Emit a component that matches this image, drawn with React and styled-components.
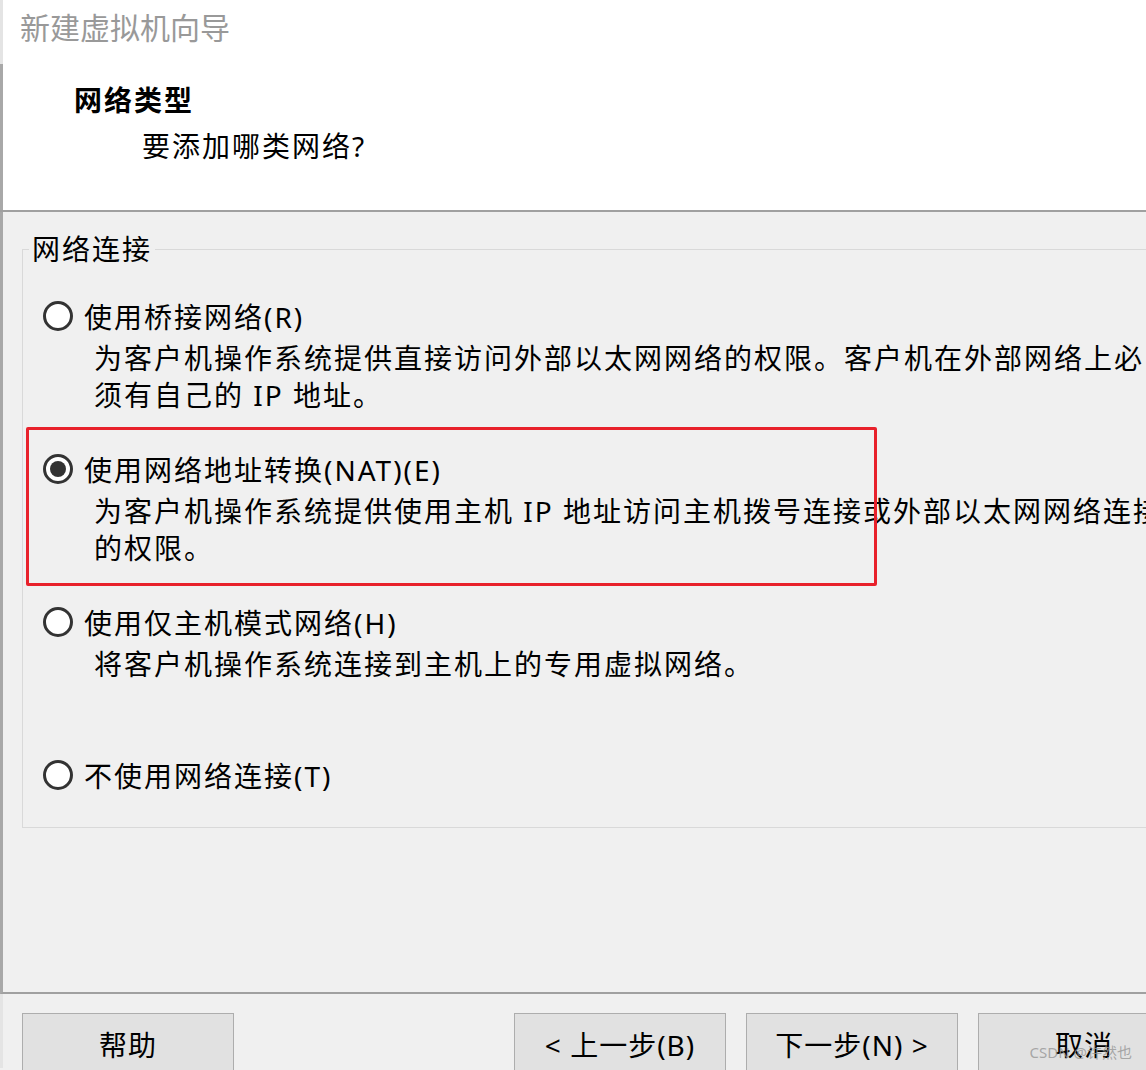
import React from 'react'
import styled, { createGlobalStyle } from 'styled-components'

const GlobalStyle = createGlobalStyle`
  html, body {
    margin: 0;
    padding: 0;
    background: #f0f0f0;
    overflow: hidden;
  }
  body {
    font-family: "Noto Sans", "Noto Sans CJK SC", sans-serif;
    color: #000;
  }
`

const Frame = styled.div`
  width: 1146px;
  height: 1070px;
  overflow: hidden;
  position: relative;
  background: #f0f0f0;
`

const Header = styled.div`
  background: #fff;
  height: 210px;
  border-bottom: 2px solid #a0a0a0;
`

const TitleBar = styled.div`
  height: 64px;
  border-left: 3px solid #e4e4e4;
  padding-left: 17px;
  box-sizing: border-box;
  font-size: 30px;
  line-height: 56px;
  color: #999;
`

const HeaderBody = styled.div`
  height: 146px;
  border-left: 3px solid #a8a8a8;
  padding-top: 16px;
  box-sizing: border-box;
`

const Heading = styled.div`
  padding-left: 71px;
  font-size: 28px;
  font-weight: 700;
  line-height: 40px;
  letter-spacing: 2px;
`

const SubHeading = styled.div`
  margin-top: 6px;
  padding-left: 139px;
  font-size: 28px;
  line-height: 40px;
  letter-spacing: 2px;
`

const Main = styled.div`
  height: 782px;
  border-left: 3px solid #a8a8a8;
  border-bottom: 2px solid #a0a0a0;
  padding-left: 19px;
  padding-top: 17px;
  box-sizing: border-box;
`

const GroupBox = styled.fieldset`
  margin: 0;
  width: 1200px;
  border: 1px solid #d9d9d9;
  padding: 26px 0 31px 20px;
  box-sizing: border-box;
`

const Legend = styled.legend`
  margin-left: -14px;
  padding: 0 3px;
  font-size: 28px;
  line-height: 40px;
  letter-spacing: 2px;
`

const OptionList = styled.div`
  display: flex;
  flex-direction: column;
  gap: 34px;
`

const Option = styled.div`
  position: relative;
`

const OptionRow = styled.div`
  display: flex;
  align-items: center;
  height: 42px;
  gap: 11px;
  font-size: 28px;
  letter-spacing: 2px;
  white-space: nowrap;
`

const Radio = styled.span`
  width: 30px;
  height: 30px;
  box-sizing: border-box;
  border-radius: 50%;
  border: 3px solid #333;
  background: #fff;
  display: flex;
  align-items: center;
  justify-content: center;
  flex-shrink: 0;

  &::after {
    content: '';
    width: 16px;
    height: 16px;
    border-radius: 50%;
    background: ${p => (p.$checked ? '#333' : 'transparent')};
  }
`

const Desc = styled.div`
  margin-top: 3px;
  min-height: 74px;
  padding-left: 51px;
  font-size: 28px;
  line-height: 37px;
  letter-spacing: 2px;
`

const DescLine = styled.div`
  white-space: nowrap;
`

const Highlight = styled.div`
  position: absolute;
  left: -17px;
  top: -21px;
  width: 851px;
  height: 159px;
  box-sizing: border-box;
  border: 3px solid #e8212b;
  border-radius: 2px;
  pointer-events: none;
`

const Footer = styled.div`
  display: flex;
  padding: 19px 0 0 19px;
  border-left: 3px solid #e4e4e4;
  height: 74px;
  box-sizing: border-box;
`

const Button = styled.div`
  width: 212px;
  height: 62px;
  flex-shrink: 0;
  box-sizing: border-box;
  border: 1px solid #adadad;
  background: #e1e1e1;
  display: flex;
  align-items: center;
  justify-content: center;
  font-size: 28px;
  letter-spacing: 1px;
  margin-left: ${p => p.$gap || 0}px;
  white-space: nowrap;
`

const Watermark = styled.div`
  position: absolute;
  right: 14px;
  bottom: 8px;
  font-size: 15px;
  color: rgba(150, 150, 150, 0.8);
  white-space: nowrap;
`

const options = [
  {
    label: '使用桥接网络(R)',
    lines: [
      '为客户机操作系统提供直接访问外部以太网网络的权限。客户机在外部网络上必',
      '须有自己的 IP 地址。',
    ],
  },
  {
    label: '使用网络地址转换(NAT)(E)',
    checked: true,
    highlight: true,
    lines: [
      '为客户机操作系统提供使用主机 IP 地址访问主机拨号连接或外部以太网网络连接',
      '的权限。',
    ],
  },
  {
    label: '使用仅主机模式网络(H)',
    lines: ['将客户机操作系统连接到主机上的专用虚拟网络。'],
  },
  {
    label: '不使用网络连接(T)',
    lines: [],
  },
]

const App = () => {
  return (
    <Frame>
      <GlobalStyle />
      <Header>
        <TitleBar>新建虚拟机向导</TitleBar>
        <HeaderBody>
          <Heading>网络类型</Heading>
          <SubHeading>要添加哪类网络?</SubHeading>
        </HeaderBody>
      </Header>
      <Main>
        <GroupBox>
          <Legend>网络连接</Legend>
          <OptionList>
            {options.map(o => (
              <Option key={o.label}>
                <OptionRow>
                  <Radio $checked={o.checked} />
                  {o.label}
                </OptionRow>
                {o.lines.length > 0 && (
                  <Desc>
                    {o.lines.map(l => (
                      <DescLine key={l}>{l}</DescLine>
                    ))}
                  </Desc>
                )}
                {o.highlight && <Highlight />}
              </Option>
            ))}
          </OptionList>
        </GroupBox>
      </Main>
      <Footer>
        <Button>帮助</Button>
        <Button $gap={280}>&lt; 上一步(B)</Button>
        <Button $gap={20}>下一步(N) &gt;</Button>
        <Button $gap={20}>取消</Button>
      </Footer>
      <Watermark>CSDN @许然也</Watermark>
    </Frame>
  )
}

export default App
